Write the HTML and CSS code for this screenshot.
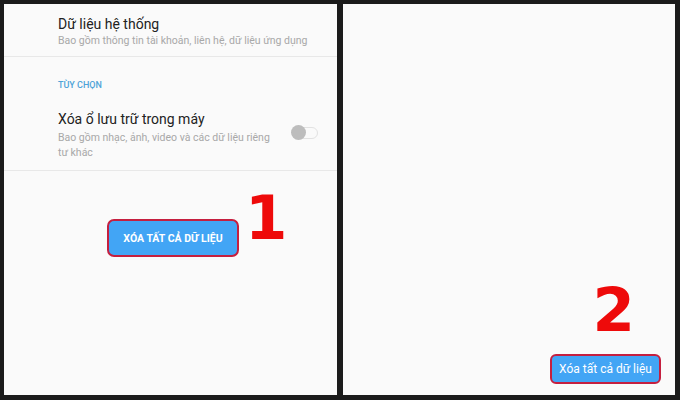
FILE: index.html
```html
<!DOCTYPE html>
<html lang="vi">
<head>
<meta charset="utf-8">
<link rel="stylesheet" href="styles.css">
</head>
<body>
<div class="frame">
  <section class="panel left">
    <div class="row first">
      <div class="title">Dữ liệu hệ thống</div>
      <div class="sub">Bao gồm thông tin tài khoản, liên hệ, dữ liệu ứng dụng</div>
    </div>
    <div class="section-head">TÙY CHỌN</div>
    <div class="row second">
      <div class="texts">
        <div class="title">Xóa ổ lưu trữ trong máy</div>
        <div class="sub">Bao gồm nhạc, ảnh, video và các dữ liệu riêng<br>tư khác</div>
      </div>
      <div class="toggle"><span class="knob"></span></div>
    </div>
    <div class="action">
      <div class="btn big">XÓA TẤT CẢ DỮ LIỆU</div>
      <div class="num one">1</div>
    </div>
  </section>
  <section class="panel right">
    <div class="num two">2</div>
    <div class="btn small">Xóa tất cả dữ liệu</div>
  </section>
</div>
</body>
</html>
```
FILE: styles.css
```css
html, body { margin: 0; padding: 0; }
body {
  background: #1b1b1b;
  width: 680px;
  height: 400px;
  overflow: hidden;
  font-family: Roboto, "Noto Sans", sans-serif;
}
.frame {
  display: flex;
  gap: 6px;
  padding: 4px 5px 5px 4px;
  height: 391px;
}
.panel {
  background: #fafafa;
  height: 391px;
}
.left { width: 333px; display: flex; flex-direction: column; }
.right {
  width: 332px;
  display: flex;
  flex-direction: column;
  justify-content: flex-end;
  align-items: flex-end;
  padding: 0 14px 11px 0;
  box-sizing: border-box;
}
.row { padding-left: 54px; border-bottom: 1px solid #e8e8e8; box-sizing: border-box; }
.title { font-size: 14px; color: #222; line-height: 18px; }
.sub { font-size: 10.5px; color: #a8a8a8; line-height: 15px; }
.first { height: 53px; padding-top: 11px; }
.section-head {
  font-size: 9px;
  font-weight: 500;
  line-height: 12px;
  color: #4ea3d8;
  padding: 22px 0 0 54px;
  height: 37px;
  box-sizing: border-box;
}
.second {
  display: flex;
  align-items: flex-start;
  justify-content: space-between;
  padding: 16px 19px 0 54px;
  height: 77px;
}
.second .title { margin-bottom: 2px; }
.toggle {
  width: 21px;
  height: 10px;
  border: 1px solid #e2e2e2;
  border-radius: 6px;
  position: relative;
  margin-top: 17px;
}
.knob {
  position: absolute;
  left: -5px;
  top: -3px;
  width: 15px;
  height: 15px;
  border-radius: 50%;
  background: #bdbdbd;
}
.action {
  display: flex;
  align-items: flex-start;
  gap: 6px;
  padding: 16px 0 0 103px;
}
.btn {
  background: #42a5f5;
  color: #fff;
  border: 2px solid #c51f3f;
  border-radius: 7px;
  box-sizing: border-box;
  display: flex;
  align-items: center;
  justify-content: center;
}
.big {
  width: 132px;
  height: 38px;
  font-size: 10.5px;
  font-weight: 700;
  margin-top: 32px;
}
.small {
  width: 111px;
  height: 30px;
  font-size: 12px;
  border-radius: 6px;
}
.num {
  font-family: "DejaVu Sans", sans-serif;
  font-weight: 700;
  color: #ee0a0a;
  line-height: 1;
}
.one { font-size: 61px; }
.two { font-size: 61px; margin: 0 26px 14px 0; }
```
